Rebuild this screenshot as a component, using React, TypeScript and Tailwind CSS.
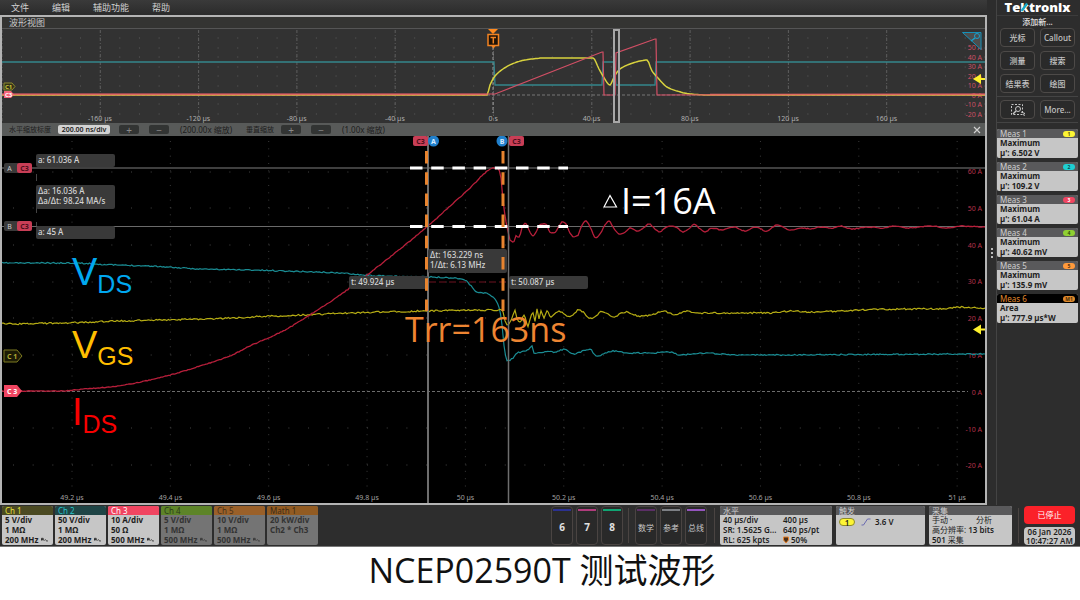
import { FC, ReactNode } from 'react'
import clsx from 'clsx'

type Point = [number, number]

const range = (n: number) => Array.from({ length: n }, (_, i) => i)

const toLine = (points: Point[]) => points.map((p) => p.join(',')).join(' ')

// monotone cubic through the points, resampled, with a small repeatable ripple on top
const sample = (points: Point[], amp: number, seed: number) => {
  const secants = points.slice(1).map(([x, y], i) => (y - points[i][1]) / (x - points[i][0]))
  const slopes = points.map((_, i) => {
    const a = secants[i - 1] ?? 0
    const b = secants[i] ?? 0
    return a * b > 0 ? (2 * a * b) / (a + b) : 0
  })
  const out: string[] = []
  let s = seed
  for (let i = 0; i < points.length - 1; i++) {
    const [x0, y0] = points[i]
    const [x1, y1] = points[i + 1]
    const h = x1 - x0
    const steps = Math.max(1, Math.round(h / 1.5))
    for (let k = 0; k < steps; k++) {
      s = (s * 16807) % 2147483647
      const jitter = (s / 2147483647 - 0.5) * 2 * amp
      const t = k / steps
      const y =
        (1 + 2 * t) * (1 - t) ** 2 * y0 +
        t * (1 - t) ** 2 * h * slopes[i] +
        t * t * (3 - 2 * t) * y1 +
        t * t * (t - 1) * h * slopes[i + 1]
      out.push(`${(x0 + h * t).toFixed(1)},${(y + jitter).toFixed(1)}`)
    }
  }
  out.push(points[points.length - 1].join(','))
  return out.join(' ')
}

const menus = ['文件', '编辑', '辅助功能', '帮助']

const measurements = [
  { name: 'Meas 1', kind: 'Maximum', value: '6.502 V', tag: '1', pill: 'bg-[#fdf534] text-[#55510c]' },
  { name: 'Meas 2', kind: 'Maximum', value: '109.2 V', tag: '2', pill: 'bg-[#1fcfd2] text-[#0b4c4d]' },
  { name: 'Meas 3', kind: 'Maximum', value: '61.04 A', tag: '3', pill: 'bg-[#f04561] text-white' },
  { name: 'Meas 4', kind: 'Maximum', value: '40.62 mV', tag: '4', pill: 'bg-[#8fd032] text-[#2f480c]' },
  { name: 'Meas 5', kind: 'Maximum', value: '135.9 mV', tag: '5', pill: 'bg-[#ff9a3c] text-[#5c3208]' },
  { name: 'Meas 6', kind: 'Area', value: '777.9 µs*W', tag: 'M1', pill: 'bg-[#e08a2c] text-[#4a2c08]', math: true },
]

const channels = [
  { name: 'Ch 1', lines: ['5 V/div', '1 MΩ', '200 MHz'], head: 'bg-[#4b4a22] text-[#e6e03c]', on: true },
  { name: 'Ch 2', lines: ['50 V/div', '1 MΩ', '200 MHz'], head: 'bg-[#1f4546] text-[#27c3c6]', on: true },
  { name: 'Ch 3', lines: ['10 A/div', '50 Ω', '500 MHz'], head: 'bg-[#f04561] text-white', on: true },
  { name: 'Ch 4', lines: ['5 V/div', '1 MΩ', '500 MHz'], head: 'bg-[#5d8428] text-[#2c3a18]', on: false },
  { name: 'Ch 5', lines: ['10 V/div', '1 MΩ', '500 MHz'], head: 'bg-[#9a6029] text-[#46301a]', on: false },
  { name: 'Math 1', lines: ['20 kW/div', 'Ch2 * Ch3'], head: 'bg-[#925b22] text-[#3b2a17]', on: false },
]

const overviewCyan: Point[] = [
  [0, 33], [492, 33], [493, 56], [600, 56], [601, 33], [612, 33], [614, 56], [653, 56], [654, 33], [983, 33],
]
const overviewYellow: Point[] = [
  [0, 66], [485, 66], [488, 56], [493, 47], [501, 40], [510, 35], [523, 31], [543, 29], [591, 29],
  [597, 40], [601, 47], [608, 56], [612, 48], [618, 40], [628, 35], [638, 32], [645, 31], [650, 42],
  [656, 49], [665, 58], [675, 62], [688, 65], [708, 66], [983, 66],
]
const overviewRed: Point[] = [
  [0, 65], [493, 65], [600, 23], [601, 23], [602, 66], [613, 66], [614, 24], [653, 10], [654, 10], [655, 66], [983, 65],
]

const zoomCyan: Point[] = [
  [0, 127], [68, 127], [113, 129], [148, 130], [198, 133], [248, 134], [283, 135], [338, 137], [378, 140],
  [426, 141], [453, 142], [463, 144], [469, 150], [475, 156], [483, 157], [488, 159], [493, 163],
  [497, 171], [500, 189], [502, 209], [505, 225], [511, 222], [515, 217], [524, 215], [528, 212],
  [530, 210], [532, 217], [543, 216], [553, 216], [563, 213], [571, 218], [588, 213], [594, 220],
  [611, 215], [626, 217], [648, 217], [668, 216], [678, 219], [698, 217], [740, 219], [983, 218],
]
const zoomYellow: Point[] = [
  [0, 188], [58, 187], [118, 185], [198, 183], [298, 179], [378, 176], [426, 175], [498, 174], [501, 175],
  [503, 184], [505, 189], [508, 186], [511, 179], [513, 174], [515, 182], [518, 186], [522, 179],
  [526, 190], [528, 184], [531, 176], [533, 185], [535, 173], [537, 183], [539, 174], [542, 183],
  [545, 175], [549, 181], [557, 175], [568, 181], [577, 174], [590, 183], [600, 175], [611, 181],
  [623, 176], [638, 180], [653, 178], [661, 175], [675, 179], [682, 175], [700, 177], [728, 177],
  [768, 177], [790, 175], [808, 176], [858, 174], [898, 173], [938, 173], [958, 171], [983, 172],
]
const zoomRed: Point[] = [
  [0, 255], [58, 255], [83, 253], [108, 251], [138, 246], [168, 239], [198, 230], [228, 220], [248, 210],
  [283, 194], [298, 185], [328, 166], [365, 139], [398, 113], [426, 90], [448, 70], [468, 52], [483, 37],
  [491, 32], [496, 32], [499, 42], [501, 64], [504, 86], [506, 95], [508, 104], [512, 106], [514, 100],
  [517, 101], [520, 92], [523, 87], [527, 94], [531, 100], [535, 94], [539, 88], [544, 88], [548, 96],
  [552, 97], [556, 92], [560, 86], [564, 88], [568, 97], [572, 101], [576, 99], [580, 89], [584, 85],
  [588, 91], [594, 102], [598, 98], [603, 89], [607, 85], [611, 91], [617, 98], [623, 96], [628, 92],
  [636, 95], [643, 91], [647, 88], [654, 94], [658, 96], [664, 91], [669, 90], [675, 92], [681, 96],
  [687, 93], [692, 88], [697, 92], [703, 96], [710, 92], [720, 94], [731, 91], [743, 95], [754, 91],
  [764, 95], [775, 89], [788, 94], [800, 92], [810, 93], [818, 91], [831, 92], [838, 90], [850, 93],
  [866, 91], [880, 92], [892, 90], [905, 92], [930, 90], [945, 92], [960, 90], [983, 91],
]

const Overview: FC = () => (
  <svg viewBox="0 0 983 94" className="block w-full h-auto bg-[#323232]" role="img" aria-label="波形视图">
    {range(10).map((i) => (
      <line key={i} x1={98 * i + i * 0.3} x2={98 * i + i * 0.3} y1="1" y2="94" stroke="#5e5e5e" strokeDasharray="3 2 1 2" />
    ))}
    {[9, 19, 28, 38, 47, 57, 75, 85].map((y) => (
      <line key={y} x1="19" x2="983" y1={y} y2={y} stroke="#5c5c5c" strokeDasharray="1 18.66" />
    ))}
    <line x1="0" x2="983" y1="66" y2="66" stroke="#777" strokeDasharray="3 2" />
    <line x1="491" x2="491" y1="18" y2="84" stroke="#999" strokeDasharray="3 2" />
    <g fontFamily="Noto Sans, sans-serif" fontSize="7" fill="#b0b0b0" textAnchor="middle">
      {['-160 µs', '-120 µs', '-80 µs', '-40 µs', '0 s', '40 µs', '80 µs', '120 µs', '160 µs'].map((t, i) => (
        <text key={t} x={98 * (i + 1) + i * 0.3} y="92">{t}</text>
      ))}
    </g>
    <g fontFamily="Noto Sans, sans-serif" fontSize="7" fill="#cc5065" textAnchor="end">
      {['50 A', '40 A', '30 A', '20 A', '10 A', '0 A', '-10 A', '-20 A'].map((t, i) => (
        <text key={t} x="980" y={21 + i * 9.5}>{t}</text>
      ))}
    </g>
    <g fill="none">
      <polyline points={toLine(overviewCyan)} stroke="#35868c" strokeWidth="1.300" />
      <polyline points={sample(overviewYellow, 0, 1)} stroke="#d8d23e" strokeWidth="1.500" />
      <polyline points={toLine(overviewRed)} stroke="#d24f65" strokeWidth="1.200" />
      <line x1="0" x2="485" y1="65.500" y2="65.500" stroke="#e06a62" strokeWidth="1.600" />
      <line x1="708" x2="983" y1="65.500" y2="65.500" stroke="#e06a62" strokeWidth="1.600" />
    </g>
    <rect x="612" y="1" width="5" height="92" fill="none" stroke="#a8a8a8" strokeWidth="2" />
    {/* trigger marker */}
    <path d="M486 0h10l-5 5z" fill="#ff8a1e" />
    <path d="M486 5.500h10.500v11h-10.500z" fill="#1c1208" stroke="#f28322" strokeWidth="1.500" />
    <path d="M489 16.500h5l-2.500 3z" fill="#f28322" />
    <path d="M488.500 8.500h5.500M491.300 8.500v6" stroke="#f28322" strokeWidth="1.500" />
    {/* channel handles */}
    <path d="M2 54h8l3 3.500l-3 3.500h-8z" fill="#323218" stroke="#8d8a2e" />
    <text x="3" y="60" fontFamily="Noto Sans, sans-serif" fontSize="6" fontWeight="700" fill="#cfc93a">C1</text>
    <path d="M2 62h7l3 3.500l-3 3.500h-7z" fill="#f4647c" />
    <text x="3" y="68" fontFamily="Noto Sans, sans-serif" fontSize="6" fontWeight="700" fill="#fff">C3</text>
    <path d="M971 50l8-5v4h5v2h-5v4z" fill="#fdf02c" />
    {/* pan / zoom corner */}
    <path d="M960.500 3.500h18.500v17z" fill="#4d4d4d" stroke="#1590b8" />
    <circle cx="975" cy="7" r="2.500" fill="none" stroke="#1ba0cc" />
    <path d="M973 9l-4 3" stroke="#1ba0cc" strokeWidth="1.500" />
  </svg>
)

const CursorHandle: FC<{ y: number; name: string }> = ({ y, name }) => (
  <g fontFamily="Noto Sans, sans-serif" fontSize="7" textAnchor="middle">
    <rect x="2" y={y - 5} width="15" height="10" rx="2" fill="#3a3a3a" />
    <text x="7.500" y={y + 2.5} fill="#ccc">{name}</text>
    <rect x="15" y={y - 5} width="15" height="10" rx="2" fill="#c83e56" />
    <text x="22.500" y={y + 2.5} fontWeight="700" fill="#4a0f1b">C3</text>
  </g>
)

const Readout: FC<{ x: number; y: number; w: number; lines: string[] }> = ({ x, y, w, lines }) => (
  <g fontFamily="Noto Sans, sans-serif" fontSize="8" fontWeight="500" fill="#d4d4d4">
    <rect x={x} y={y} width={w} height={lines.length > 1 ? 24 : 13} rx="2" fill="#393939" />
    {lines.map((t, i) => (
      <text key={t} x={x + 2} y={y + 9 + i * 10}>{t}</text>
    ))}
  </g>
)

const ZoomView: FC = () => (
  <svg viewBox="0 0 983 367" className="block w-full h-auto bg-black" role="img" aria-label="缩放波形">
    {range(10).map((i) => (
      <line key={i} x1={70 + i * 98.35} x2={70 + i * 98.35} y1="5" y2="355" stroke="#3a3a3a" strokeDasharray="1 6.33" />
    ))}
    {[36, 72, 109, 146, 182, 219, 292, 329].map((y) => (
      <line key={y} x1="11" x2="960" y1={y} y2={y} stroke="#444" strokeDasharray="1 18.67" />
    ))}
    <line x1="0" x2="966" y1="255.500" y2="255.500" stroke="#6c6c6c" strokeDasharray="3 2" />
    <g fontFamily="Noto Sans, sans-serif" fontSize="7" fill="#a0a0a0" textAnchor="middle">
      {['49.2 µs', '49.4 µs', '49.6 µs', '49.8 µs', '50 µs', '50.2 µs', '50.4 µs', '50.6 µs', '50.8 µs', '51 µs'].map((t, i) => (
        <text key={t} x={70 + i * 98.35} y="364">{t}</text>
      ))}
    </g>
    <g fontFamily="Noto Sans, sans-serif" fontSize="7" fill="#b5334b" textAnchor="end">
      {['60 A', '50 A', '40 A', '30 A', '20 A', '10 A', '0 A', '-10 A', '-20 A'].map((t, i) => (
        <text key={t} x="980" y={38 + i * 36.8}>{t}</text>
      ))}
    </g>

    <line x1="0" x2="983" y1="32" y2="32" stroke="#3f3f3f" strokeWidth="2" />
    <line x1="0" x2="983" y1="90.500" y2="90.500" stroke="#6a6a6a" />
    <line x1="34.500" x2="34.500" y1="38" y2="90" stroke="#444" strokeDasharray="7 9" />
    <line x1="427" x2="506" y1="146" y2="146" stroke="#6e1220" strokeDasharray="7 3" />

    <g fill="none">
      <polyline points={sample(zoomCyan, 0.6, 11)} stroke="#1a8c93" strokeWidth="1.200" />
      <polyline points={sample(zoomYellow, 0.8, 23)} stroke="#b5ac14" strokeWidth="1.200" />
      <polyline points={sample(zoomRed, 0.4, 37)} stroke="#b81f3b" strokeWidth="1.300" />
    </g>

    <line x1="426" x2="426" y1="0" y2="367" stroke="#6e6e6e" strokeWidth="2" />
    <line x1="506.500" x2="506.500" y1="0" y2="367" stroke="#6e6e6e" strokeWidth="1.500" />

    <Readout x={34} y={18} w={79} lines={['a: 61.036 A']} />
    <Readout x={34} y={49} w={79} lines={['Δa: 16.036 A', 'Δa/Δt: 98.24 MA/s']} />
    <Readout x={34} y={90} w={79} lines={['a: 45 A']} />
    <Readout x={426} y={113} w={79} lines={['Δt: 163.229 ns', '1/Δt: 6.13 MHz']} />
    <Readout x={347} y={140} w={79} lines={['t: 49.924 µs']} />
    <Readout x={507} y={140} w={79} lines={['t: 50.087 µs']} />
    <CursorHandle y={32} name="A" />
    <CursorHandle y={90} name="B" />

    <g fontFamily="Noto Sans, sans-serif" fontSize="7" fontWeight="700" textAnchor="middle">
      <rect x="411" y="0" width="15" height="10" rx="2" fill="#c83e56" />
      <text x="418.500" y="8" fill="#4a0f1b">C3</text>
      <circle cx="431.500" cy="5" r="5.500" fill="#2180cc" />
      <text x="431.500" y="8" fill="#d8ecff">A</text>
      <circle cx="500" cy="5" r="5.500" fill="#2180cc" />
      <text x="500" y="8" fill="#d8ecff">B</text>
      <rect x="507" y="0" width="15" height="10" rx="2" fill="#c83e56" />
      <text x="514.500" y="8" fill="#4a0f1b">C3</text>
    </g>

    {/* channel handles */}
    <path d="M2 214h13l5 6l-5 6h-13z" fill="#1c1b06" stroke="#7d7a20" />
    <text x="5" y="222.500" fontFamily="Noto Sans, sans-serif" fontSize="7" fontWeight="700" fill="#b0aa34">C 1</text>
    <path d="M2 249h13l5 6l-5 6h-13z" fill="#f04561" />
    <text x="5" y="257.500" fontFamily="Noto Sans, sans-serif" fontSize="7" fontWeight="700" fill="#fff">C 3</text>
    <path d="M971 193.500l8-5v4h5v2h-5v4z" fill="#fdf02c" />

    <g strokeWidth="3" fill="none">
      <path d="M408 32h158M408 90.500h158" stroke="#fff" strokeDasharray="12.500 8.700" />
      <path d="M424.500 15v160M501 15v160" stroke="#e8842f" strokeDasharray="12.500 8.700" />
    </g>
    <g fontFamily="Open Sans, sans-serif">
      <path d="M602 71L608 59.500L614.500 71Z" fill="none" stroke="#fff" strokeWidth="1.200" />
      <text x="619" y="78" fontSize="36" fill="#fff">I=16A</text>
      <text x="403" y="206" fontSize="34" fill="#ee8532">Trr=163ns</text>
    </g>
    <g fontFamily="Liberation Sans, Arial, sans-serif" fontSize="38">
      <text x="70" y="149" fill="#00a8f0">V<tspan fontSize="25" dy="8">DS</tspan></text>
      <text x="70" y="222" fill="#ffbe00">V<tspan fontSize="25" dy="7">GS</tspan></text>
      <text x="70" y="289" fill="#f80000">I<tspan fontSize="25" dy="8">DS</tspan></text>
    </g>
  </svg>
)

const ZoomButton: FC<{ label: string; children: ReactNode }> = ({ label, children }) => (
  <button aria-label={label} className="w-5 h-[9px] rounded-xs bg-[#323433] text-[#8a8a8a] flex items-center justify-center text-[10px] leading-none">
    {children}
  </button>
)

const ZoomBar: FC = () => (
  <div className="h-[13px] bg-[#585a59] flex items-center text-[8px] leading-none text-[#1c1c1c] pl-[7px] pr-1">
    <label htmlFor="hscale" className="w-[49px] text-[7px] whitespace-nowrap">水平缩放标度</label>
    <input
      id="hscale"
      defaultValue="200.00 ns/div"
      className="w-[52px] h-[9px] bg-[#d2d2d2] rounded-xs text-center text-[7px] font-semibold"
    />
    <div className="w-[50px] flex gap-[10px] ml-[9px]">
      <ZoomButton label="放大水平">+</ZoomButton>
      <ZoomButton label="缩小水平">−</ZoomButton>
    </div>
    <span className="w-[66px] ml-[11px] whitespace-nowrap">(200.00x 缩放)</span>
    <span className="w-[35px] text-[7px] whitespace-nowrap">垂直缩放</span>
    <div className="w-[50px] flex gap-[10px]">
      <ZoomButton label="放大垂直">+</ZoomButton>
      <ZoomButton label="缩小垂直">−</ZoomButton>
    </div>
    <span className="ml-[11px] whitespace-nowrap">(1.00x 缩放)</span>
    <button aria-label="关闭" className="ml-auto">
      <svg viewBox="0 0 8 8" className="size-2" stroke="#d0d0d0" strokeWidth="1.200">
        <path d="M1 1l6 6M7 1l-6 6" />
      </svg>
    </button>
  </div>
)

const SideButton: FC<{ label?: string; children: ReactNode }> = ({ label, children }) => (
  <button
    aria-label={label}
    className="h-[19px] rounded-sm border border-[#4d4a48] bg-[#2a2a2a] text-[8px] leading-none text-[#c4c4c4] font-medium flex items-center justify-center whitespace-nowrap"
  >
    {children}
  </button>
)

const Sidebar: FC = () => (
  <aside className="w-[93px] shrink-0 flex">
    <div className="w-[10px] shrink-0 flex flex-col items-center justify-center gap-0.5 border-r border-[#444]">
      <i className="size-0.5 bg-[#bbb]" />
      <i className="size-0.5 bg-[#bbb]" />
      <i className="size-0.5 bg-[#bbb]" />
    </div>
    <div className="flex-1 min-w-0 pr-0.5">
      <div className="relative h-[15px] text-center text-[13px] leading-[15px] font-extrabold text-white font-['Open_Sans',sans-serif]">
        Tektronix
        <svg viewBox="0 0 82 15" className="absolute inset-0 w-full">
          <path d="M30.500 3.500L25 11" stroke="#18a9c8" strokeWidth="2.500" />
        </svg>
      </div>
      <div className="h-[13px] border-t border-[#3c3c3c] text-center text-[8px] leading-[11px] text-[#e0e0e0] font-medium">
        添加新...
      </div>
      <div className="grid grid-cols-2 gap-x-[5px] gap-y-1 px-[3px] pb-[3px]">
        <SideButton>光标</SideButton>
        <SideButton>Callout</SideButton>
        <SideButton>测量</SideButton>
        <SideButton>搜索</SideButton>
        <SideButton>结果表</SideButton>
        <SideButton>绘图</SideButton>
      </div>
      <div className="grid grid-cols-2 gap-x-[5px] px-[3px] pt-[3px] pb-[3px] border-y border-[#444]">
        <SideButton label="缩放选择">
          <svg viewBox="0 0 16 14" className="w-4" fill="none" stroke="#c8c8c8">
            <rect x="1.500" y="1.500" width="11" height="10" strokeDasharray="2 1.500" />
            <circle cx="8" cy="6" r="2.500" />
            <path d="M6 8l-3 3" strokeWidth="1.500" />
            <path d="M11 9l4 1.500l-1.500 1l1 1.500" />
          </svg>
        </SideButton>
        <SideButton>More...</SideButton>
      </div>
      <div className="flex flex-col gap-1 mt-[6px]">
        {measurements.map((m) => (
          <section key={m.name} className="h-[29px] rounded-xs overflow-hidden bg-[#c6c6c6] text-[8px] text-[#1e1e1e]">
            <header
              className={clsx(
                'h-[9px] leading-[9px] px-[3px] flex items-center justify-between',
                m.math ? 'bg-black text-[#e08a2c]' : 'bg-[#59595b] text-[#cfcfcf]',
              )}
            >
              {m.name}
              <span className={clsx('w-3 h-[6px] rounded-full text-center text-[5px] leading-[6px] font-bold', m.pill)}>
                {m.tag}
              </span>
            </header>
            <div className="px-[3px] font-bold leading-[10px]">
              <p>{m.kind}</p>
              <p className="whitespace-nowrap">µ': {m.value}</p>
            </div>
          </section>
        ))}
      </div>
    </div>
  </aside>
)

const InfoCard: FC<{ title: string; className: string; children: ReactNode }> = ({ title, className, children }) => (
  <section className={clsx('rounded-xs overflow-hidden bg-[#c6c6c6] text-[8px] leading-[10px] font-semibold text-[#1e1e1e]', className)}>
    <header className="h-[9px] leading-[9px] px-[3px] bg-[#59595b] text-[#cfcfcf] font-normal">{title}</header>
    {children}
  </section>
)

const FooterButton: FC<{ bar: string; small?: boolean; children: ReactNode }> = ({ bar, small, children }) => (
  <button className="w-[22px] rounded-sm border border-[#4a4442] bg-[#292929] text-[#c8c8c8] flex flex-col items-center px-px pt-0.5">
    <i className={clsx('h-0.5 w-full', bar)} />
    <span className={clsx('flex-1 flex items-center', small ? 'text-[8px]' : 'text-[10px] font-bold text-[#e0e0e0]')}>{children}</span>
  </button>
)

const Divider: FC = () => <div className="w-px my-0.5 bg-[#4a4442]" />

const Footer: FC = () => (
  <footer className="h-[42px] flex pt-px pb-px pl-0.5 pr-[5px] border-b border-[#777]">
    <div className="flex gap-0.5">
      {channels.map((c) => (
        <button
          key={c.name}
          className={clsx(
            'w-[51px] rounded-xs overflow-hidden text-left text-[8px] flex flex-col whitespace-nowrap',
            c.on ? 'bg-[#c6c6c6] text-[#1e1e1e]' : 'bg-[#747474] text-[#333]',
          )}
        >
          <span className={clsx('w-full h-[9px] shrink-0 leading-[9px] pl-[3px]', c.head)}>{c.name}</span>
          <span className="block w-full pl-[3px] font-bold leading-[10px]">
            {c.lines.map((t, i) => (
              <span key={t} className="flex items-center gap-[3px]">
                {t}
                {i === 2 && (
                  <svg viewBox="0 0 8 6" className="w-[7px]" fill="none" stroke="currentColor">
                    <path d="M0.500 4V1.500h2v2.500M0.500 3h2M4 4q1-2 2 0t1.500 0" />
                  </svg>
                )}
              </span>
            ))}
          </span>
        </button>
      ))}
    </div>
    <div className="flex ml-auto">
      <div className="flex gap-[3px]">
        <FooterButton bar="bg-[#2b3190]">6</FooterButton>
        <FooterButton bar="bg-[#b03c7c]">7</FooterButton>
        <FooterButton bar="bg-[#10a573]">8</FooterButton>
      </div>
      <div className="flex gap-[3px] ml-[5px]">
        <Divider />
        <div className="flex gap-[3px] ml-[3px]">
          <FooterButton small bar="bg-[#5b2f66]">数学</FooterButton>
          <FooterButton small bar="bg-[#7d8085]">参考</FooterButton>
          <FooterButton small bar="bg-[#9455bd]">总线</FooterButton>
        </div>
        <div className="w-px" />
        <Divider />
      </div>
      <div className="flex gap-1 ml-[5px]">
        <InfoCard title="水平" className="w-[112px]">
          <div className="grid grid-cols-[60px_1fr] pl-[3px] whitespace-nowrap">
            <span>40 µs/div</span>
            <span>400 µs</span>
            <span>SR: 1.5625 G...</span>
            <span>640 ps/pt</span>
            <span>RL: 625 kpts</span>
            <span className="flex items-center gap-0.5">
              <svg viewBox="0 0 6 8" className="w-[6px]">
                <path d="M0.500 1h5v3l-2.500 3l-2.500-3z" fill="#4a2f18" stroke="#e8842f" />
              </svg>
              50%
            </span>
          </div>
        </InfoCard>
        <InfoCard title="触发" className="w-[89px]">
          <div className="flex items-center pl-[3px] pt-0.5">
            <span className="w-4 h-2 rounded-full bg-[#fdf534] border border-[#8d8a2e] text-center leading-[7px]">1</span>
            <svg viewBox="0 0 10 8" className="w-[10px] ml-1.5" fill="none" stroke="#6a6ab0">
              <path d="M0.500 7h2l4-6h3" />
            </svg>
            <span className="ml-1">3.6 V</span>
          </div>
        </InfoCard>
        <InfoCard title="采集" className="w-[83px]">
          <div className="pl-[3px] whitespace-nowrap">
            <p className="flex font-normal">
              手动 · <span className="ml-auto pr-5">分析</span>
            </p>
            <p><span className="font-normal">高分辨率:</span> 13 bits</p>
            <p>501 <span className="font-normal">采集</span></p>
          </div>
        </InfoCard>
      </div>
      <div className="flex ml-[6px] gap-[5px]">
        <Divider />
        <div className="w-[51px] flex flex-col gap-[3px]">
          <button className="h-[18px] rounded-sm bg-[#fb2129] text-white text-[8px] leading-none">已停止</button>
          <time className="h-[18px] rounded-sm bg-[#c6c6c6] text-[#1e1e1e] text-[8px] leading-[9px] font-semibold text-center whitespace-nowrap">
            06 Jan 2026
            <br />
            10:47:27 AM
          </time>
        </div>
      </div>
    </div>
  </footer>
)

const App: FC = () => {
  return (
    <main className="bg-white font-['Noto_Sans','Noto_Sans_CJK_SC',sans-serif]">
      <div className="bg-[#2d2d2d]">
        <div className="flex">
          <div className="flex-1 min-w-0">
            <nav className="h-[15px] bg-linear-to-b from-[#3a3a3a] to-[#2b2b2b] flex gap-[23px] pl-[11px] text-[9px] leading-[15px] text-[#d0d0d0]">
              {menus.map((m) => (
                <button key={m}>{m}</button>
              ))}
            </nav>
            <div className="border-2 border-[#b4b4b4]">
              <h2 className="h-3 bg-[#343432] border-b border-[#555] text-[9px] leading-[11px] text-[#c8c8c8] pl-[7px]">波形视图</h2>
              <Overview />
              <ZoomBar />
              <ZoomView />
            </div>
          </div>
          <Sidebar />
        </div>
        <Footer />
      </div>
      <h1 className="pl-1 text-center text-[34px] leading-[46px] text-[#111] font-['Open_Sans','Noto_Sans_CJK_SC',sans-serif]">
        NCEP02590T 测试波形
      </h1>
    </main>
  )
}

export default App
